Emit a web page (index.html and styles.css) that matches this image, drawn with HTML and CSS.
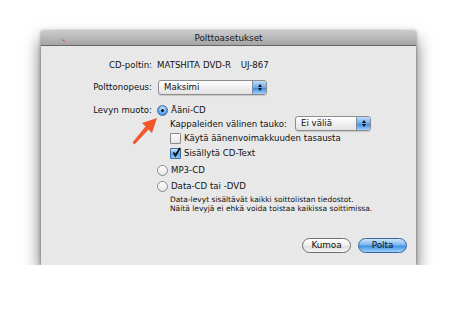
FILE: index.html
```html
<!DOCTYPE html>
<html lang="fi">
<head>
    <meta charset="UTF-8">
    <title>Polttoasetukset</title>
    <link rel="stylesheet" href="styles.css">
</head>
<body>

<div class="window">
    <div class="titlebar"><span class="mark"></span>Polttoasetukset</div>
    <div class="content">
        <div class="row row-drive">
            <div class="label">CD-poltin:</div>
            <div class="value">MATSHITA DVD-R&nbsp;&nbsp;&nbsp;UJ-867</div>
        </div>
        <div class="row row-speed">
            <div class="label">Polttonopeus:</div>
            <div class="popup popup-speed">
                <span class="popup-text">Maksimi</span>
                <span class="popup-cap"><span class="up"></span><span class="down"></span></span>
            </div>
        </div>
        <div class="row row-format">
            <div class="label">Levyn muoto:</div>
            <div class="options">
                <div class="option opt-audio"><span class="radio on"></span>Ääni-CD</div>
                <div class="sub">
                    <div class="sub-row">
                        <span class="sub-label">Kappaleiden välinen tauko:</span>
                        <div class="popup popup-gap">
                            <span class="popup-text">Ei väliä</span>
                            <span class="popup-cap"><span class="up"></span><span class="down"></span></span>
                        </div>
                    </div>
                    <div class="option opt-level"><span class="check"></span>Käytä äänenvoimakkuuden tasausta</div>
                    <div class="option opt-text"><span class="check on">
                        <svg width="11" height="11" viewBox="0 0 11 11"><path d="M2.5 5.5 L4.5 8.5 L9 1" fill="none" stroke="#111" stroke-width="1.8"/></svg>
                    </span>Sisällytä CD-Text</div>
                </div>
                <div class="option opt-mp3"><span class="radio"></span>MP3-CD</div>
                <div class="option opt-data"><span class="radio"></span>Data-CD tai -DVD</div>
                <div class="note">
                    Data-levyt sisältävät kaikki soittolistan tiedostot.<br>
                    Näitä levyjä ei ehkä voida toistaa kaikissa soittimissa.
                </div>
            </div>
        </div>
        <div class="buttons">
            <button class="btn">Kumoa</button>
            <button class="btn btn-default">Polta</button>
        </div>
    </div>
    <!-- annotation arrow over the dialog -->
    <svg class="arrow" width="30" height="32" viewBox="0 0 30 32">
        <polygon points="27,3 12,8 15.5,11.5 2.5,27.5 4.5,29.5 18.5,14.5 22,18" fill="#f2572b"/>
    </svg>
</div>

</body>
</html>
```

FILE: styles.css
```css
body {
    margin: 0;
    background-color: #ffffff;
    font-family: "DejaVu Sans", sans-serif;
    font-size: 8.6px;
    color: #111;
}
.window {
    position: relative;
    width: 375px;
    height: 234px;
    margin: 31px 0 0 41px;
    background-color: #e8e8e8;
    box-shadow: 0 9px 16px rgba(0, 0, 0, 0.6), 0 0 3px rgba(0, 0, 0, 0.4);
    display: flex;
    flex-direction: column;
}
.titlebar {
    height: 14px;
    line-height: 14px;
    border-bottom: 1px solid #666666;
    background: linear-gradient(#cacaca, #a4a4a4);
    text-align: center;
    font-size: 8.8px;
    color: #1a1a1a;
}
.mark {
    position: absolute;
    left: 21px;
    top: 9px;
    width: 3px;
    height: 1px;
    background-color: #e0503a;
    transform: rotate(35deg);
}
.content {
    flex: 1;
    display: flex;
    flex-direction: column;
    padding: 13px 9px 12px 0;
}
.row {
    display: flex;
    align-items: flex-start;
}
.label {
    width: 111px;
    margin-right: 5px;
    text-align: right;
    line-height: 12px;
}
.value {
    line-height: 12px;
    word-spacing: 0.5px;
}
.row-drive {
    height: 12px;
}
.row-speed {
    margin-top: 8px;
    height: 16px;
    align-items: center;
}
.row-format {
    margin-top: 9px;
}
.popup {
    display: flex;
    height: 13px;
    border: 1px solid #8d8d8d;
    border-radius: 3px;
    background: linear-gradient(#ffffff, #f0f0f0 50%, #e2e2e2);
    box-shadow: 0 1px 1px rgba(0, 0, 0, 0.15);
    overflow: hidden;
}
.popup-speed {
    width: 107px;
    margin-left: 1px;
}
.popup-gap {
    width: 74px;
}
.popup-text {
    flex: 1;
    padding-left: 5px;
    line-height: 13px;
}
.popup-cap {
    width: 13px;
    border-left: 1px solid #7a8ea8;
    background: linear-gradient(#c2def8, #6aaaea 50%, #3c8ce0 55%, #9fd0fa);
    display: flex;
    flex-direction: column;
    align-items: center;
    justify-content: center;
    gap: 1px;
}
.up, .down {
    width: 0;
    height: 0;
    border-left: 2px solid transparent;
    border-right: 2px solid transparent;
}
.up {
    border-bottom: 3px solid #111;
}
.down {
    border-top: 3px solid #111;
}
.options {
    display: flex;
    flex-direction: column;
}
.option {
    display: flex;
    align-items: center;
    height: 12px;
    line-height: 12px;
}
.radio {
    width: 9px;
    height: 9px;
    margin-right: 3px;
    border: 1px solid #8a8a8a;
    border-radius: 50%;
    background: linear-gradient(#ffffff, #e4e4e4);
    display: flex;
    align-items: center;
    justify-content: center;
}
.radio.on {
    border-color: #3d6ba3;
    background: radial-gradient(circle at 50% 30%, #cfe6fb, #5da3ea 60%, #3a86d8);
}
.radio.on::after {
    content: "";
    width: 3px;
    height: 3px;
    border-radius: 50%;
    background-color: #111;
}
.sub {
    display: flex;
    flex-direction: column;
    padding-left: 13px;
}
.sub-row {
    display: flex;
    align-items: center;
    height: 15px;
}
.sub-label {
    width: 125px;
}
.check {
    width: 9px;
    height: 9px;
    margin-right: 3px;
    border: 1px solid #8a8a8a;
    border-radius: 1px;
    background: linear-gradient(#ffffff, #e4e4e4);
    position: relative;
}
.check.on {
    border-color: #3d6ba3;
    background: linear-gradient(#cfe6fb, #5da3ea 55%, #8cc4f4);
}
.check svg {
    position: absolute;
    left: 0;
    top: -2px;
}
.opt-level {
    margin-top: 1px;
}
.opt-text {
    margin-top: 3px;
}
.opt-mp3 {
    margin-top: 5px;
}
.opt-data {
    margin-top: 4px;
}
.note {
    margin-top: 3px;
    padding-left: 13px;
    font-size: 7.5px;
    line-height: 9px;
}
.buttons {
    margin-top: auto;
    display: flex;
    justify-content: flex-end;
    gap: 7px;
}
.btn {
    width: 49px;
    height: 15px;
    padding: 0;
    border: 1px solid #707070;
    border-radius: 8px;
    background: linear-gradient(#ffffff, #eeeeee 50%, #dcdcdc 55%, #f6f6f6);
    font-family: "DejaVu Sans", sans-serif;
    font-size: 8.8px;
    line-height: 13px;
    color: #111;
}
.btn-default {
    border-color: #3c64a0;
    background: linear-gradient(#cde5fb, #7ab6f0 45%, #4192e3 55%, #9ed0fa);
}
.arrow {
    position: absolute;
    left: 89px;
    top: 84px;
}
```
